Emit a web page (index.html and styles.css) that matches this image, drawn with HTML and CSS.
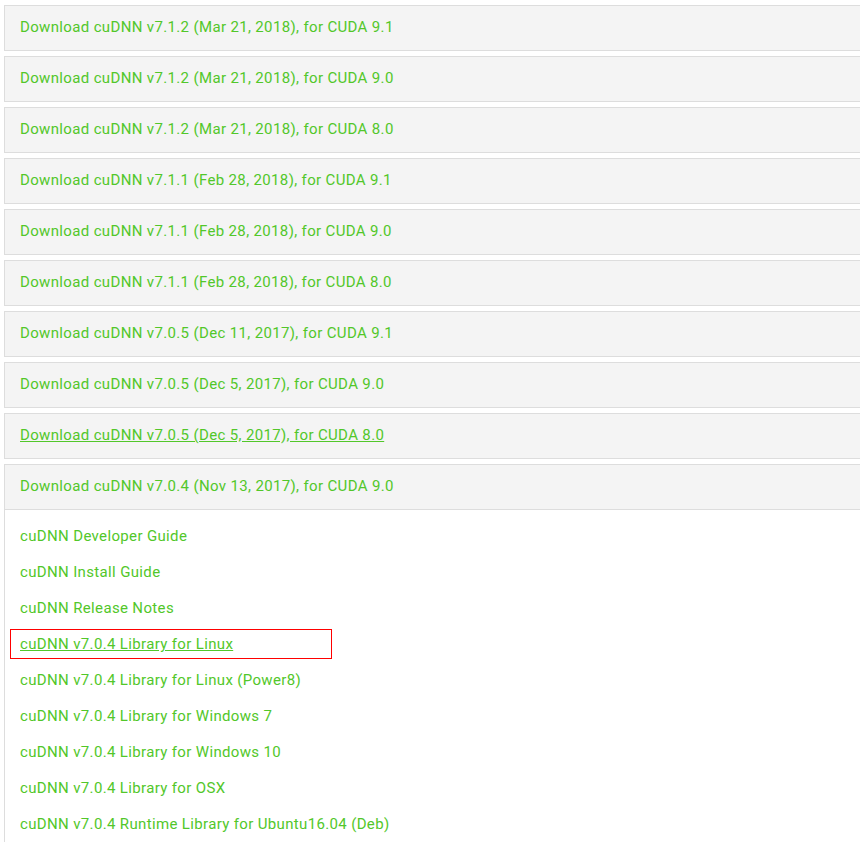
FILE: index.html
```
<!DOCTYPE html>
<html lang="en">
<head>
  <meta charset="UTF-8" />
  <title>cuDNN Download</title>
  <link rel="stylesheet" href="styles.css">
</head>
<body>
  <div class="downloads">
    <div class="panel"><div class="panel-heading"><a href="#">Download cuDNN v7.1.2 (Mar 21, 2018), for CUDA 9.1</a></div></div>
    <div class="panel"><div class="panel-heading"><a href="#">Download cuDNN v7.1.2 (Mar 21, 2018), for CUDA 9.0</a></div></div>
    <div class="panel"><div class="panel-heading"><a href="#">Download cuDNN v7.1.2 (Mar 21, 2018), for CUDA 8.0</a></div></div>
    <div class="panel"><div class="panel-heading"><a href="#">Download cuDNN v7.1.1 (Feb 28, 2018), for CUDA 9.1</a></div></div>
    <div class="panel"><div class="panel-heading"><a href="#">Download cuDNN v7.1.1 (Feb 28, 2018), for CUDA 9.0</a></div></div>
    <div class="panel"><div class="panel-heading"><a href="#">Download cuDNN v7.1.1 (Feb 28, 2018), for CUDA 8.0</a></div></div>
    <div class="panel"><div class="panel-heading"><a href="#">Download cuDNN v7.0.5 (Dec 11, 2017), for CUDA 9.1</a></div></div>
    <div class="panel"><div class="panel-heading"><a href="#">Download cuDNN v7.0.5 (Dec 5, 2017), for CUDA 9.0</a></div></div>
    <div class="panel"><div class="panel-heading"><a href="#" class="hover">Download cuDNN v7.0.5 (Dec 5, 2017), for CUDA 8.0</a></div></div>
    <div class="panel open">
      <div class="panel-heading"><a href="#">Download cuDNN v7.0.4 (Nov 13, 2017), for CUDA 9.0</a></div>
      <ul class="panel-body">
        <li><a href="#">cuDNN Developer Guide</a></li>
        <li><a href="#">cuDNN Install Guide</a></li>
        <li><a href="#">cuDNN Release Notes</a></li>
        <li class="marked"><a href="#" class="hover">cuDNN v7.0.4 Library for Linux</a></li>
        <li><a href="#">cuDNN v7.0.4 Library for Linux (Power8)</a></li>
        <li><a href="#">cuDNN v7.0.4 Library for Windows 7</a></li>
        <li><a href="#">cuDNN v7.0.4 Library for Windows 10</a></li>
        <li><a href="#">cuDNN v7.0.4 Library for OSX</a></li>
        <li><a href="#">cuDNN v7.0.4 Runtime Library for Ubuntu16.04 (Deb)</a></li>
      </ul>
    </div>
  </div>
</body>
</html>
```
FILE: styles.css
```
:root {
  --green: #52c72a;
  --border: #dddddd;
  --heading-bg: #f4f4f4;
  --font: Roboto, 'Liberation Sans', sans-serif;
}
* { box-sizing: border-box; }
html { overflow: hidden; }
body {
  margin: 0;
  background: #fff;
  font-family: var(--font);
  font-size: 15px;
  letter-spacing: 0.35px;
}
a { color: var(--green); text-decoration: none; }
a.hover { text-decoration: underline; }
.downloads {
  padding: 5px 0 0 4px;
  width: 870px;
  display: flex;
  flex-direction: column;
  gap: 5px;
}
.panel { border: 1px solid var(--border); }
.panel-heading {
  background: var(--heading-bg);
  height: 44px;
  padding: 0 15px 2px;
  display: flex;
  align-items: center;
}
.panel.open { border-bottom: none; }
.panel.open .panel-heading { border-bottom: 1px solid var(--border); height: 45px; }
.panel-body {
  list-style: none;
  margin: 0;
  padding: 8px 0 0;
}
.panel-body li {
  height: 36px;
  display: flex;
  align-items: center;
  padding-left: 15px;
}
.panel-body li.marked {
  padding-left: 5px;
}
.panel-body li.marked a {
  display: block;
  width: 322px;
  height: 30px;
  line-height: 28px;
  border: 1px solid #ff0000;
  padding-left: 9px;
}
```
